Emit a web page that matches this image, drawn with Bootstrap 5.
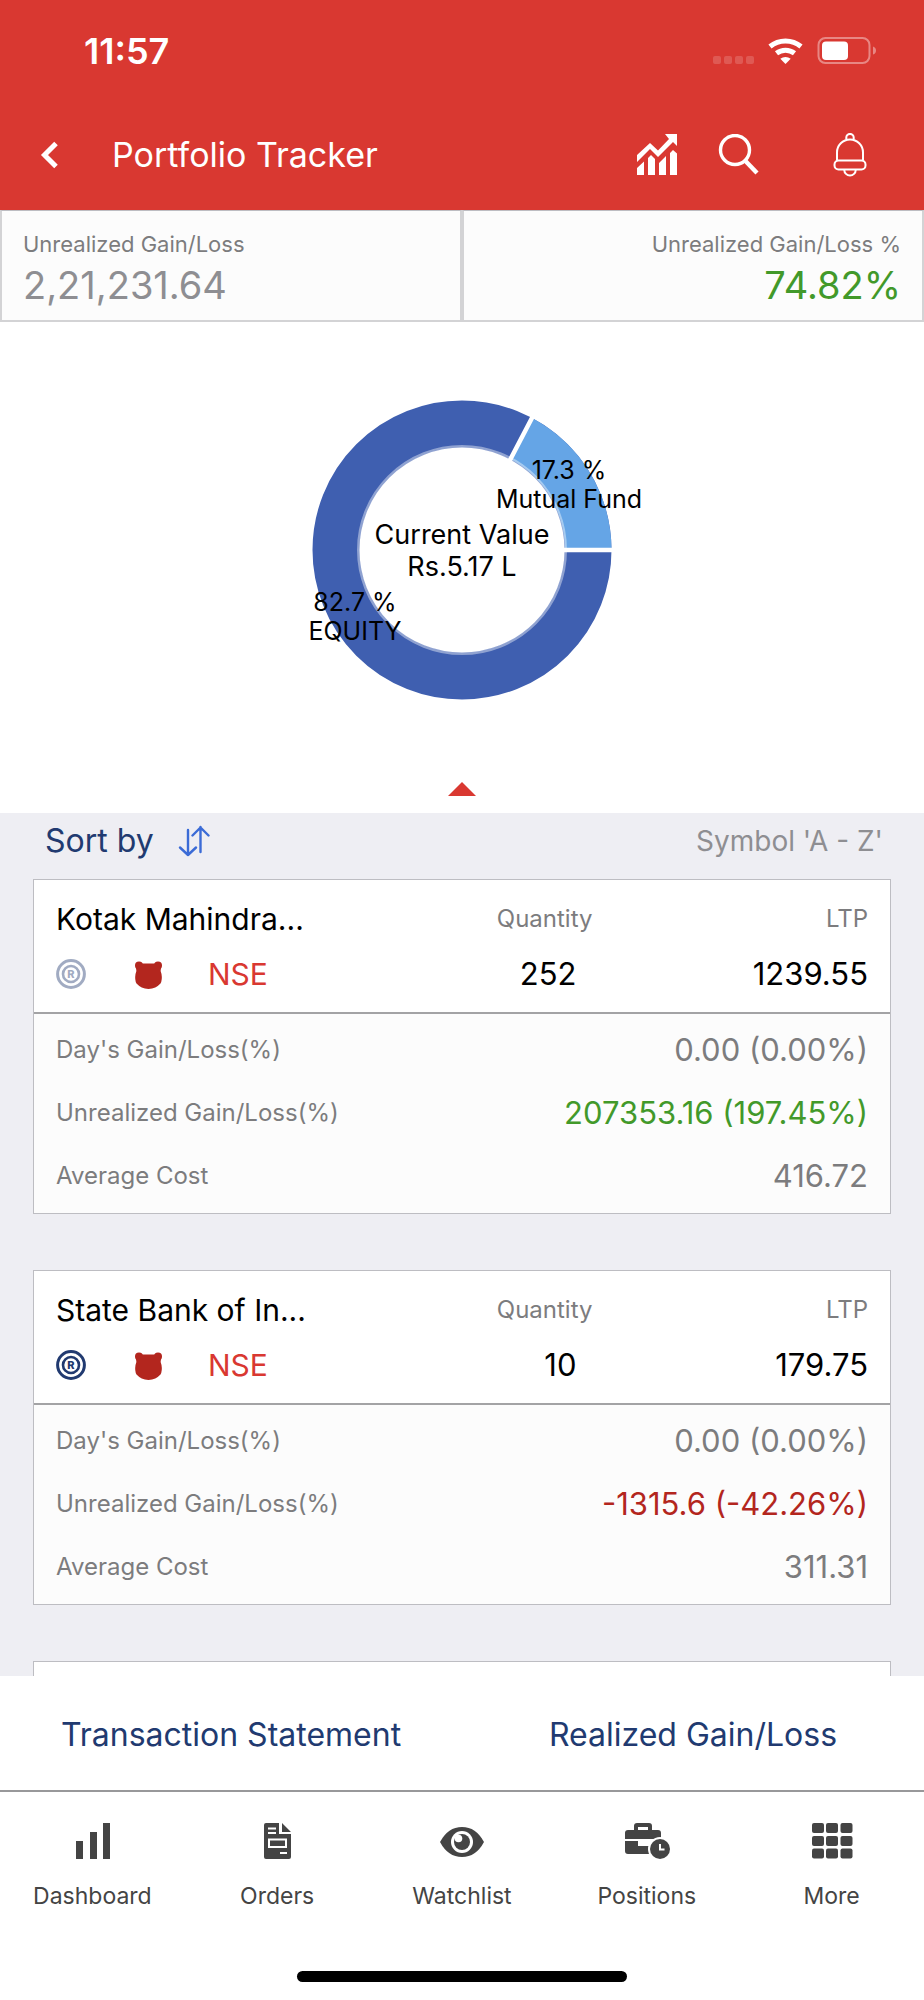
<!DOCTYPE html>
<html lang="en">
<head>
<meta charset="utf-8">
<meta name="viewport" content="width=device-width, initial-scale=1">
<title>Portfolio Tracker</title>
<link href="https://cdn.jsdelivr.net/npm/bootstrap@5.3.0/dist/css/bootstrap.min.css" rel="stylesheet">
<style>
  :root { --brand: #d93831; --navy: #213a70; --muted: #7c7c7e; --gain: #42992a; --loss: #b3261e; --line: #bdbdc2; }
  body { font-family: Inter, "Liberation Sans", sans-serif; background: #fff; color: #000; }
  a { text-decoration: none; color: inherit; }
  svg { display: block; flex: none; }
  .app-top { background: var(--brand); color: #fff; }
  .status-bar { height: 101px; padding: 0 47px 0 84px; }
  .clock { font-size: 36px; font-weight: 600; line-height: 40px; }
  .title-bar { height: 109px; padding: 0 57px 2px 40px; }
  .title-bar h1 { font-size: 34px; font-weight: 400; line-height: 40px; margin: 0 auto 0 54px; }
  .title-bar .search-btn { margin: 0 73px 0 40px; }
  .icon-btn { background: none; border: 0; padding: 0; color: inherit; }
  .stat { background: #fcfcfc; border: 2px solid #d3d3d5; border-top-width: 1px; border-top-color: var(--line); padding: 17px 21px 10px; }
  .label-text { font-size: 22px; line-height: 32px; color: var(--muted); }
  .stat-value { font-size: 38px; line-height: 50px; color: #8e8e92; }
  .chart-area { padding-top: 51px; }
  .chart-area svg { margin: 0 auto; }
  .toggle { margin: 54px auto 16px; }
  .holdings { background: #eeeef3; padding: 0 33px; }
  .sort-row { height: 66px; padding: 0 8px 10px 12px; }
  .link-text { font-size: 32px; line-height: 40px; color: var(--navy); }
  .sort-value { font-size: 28px; line-height: 40px; color: #8e8e92; }
  .holding { border: 1px solid var(--line); background: #fcfcfc; }
  .holding + .holding { margin-top: 56px; }
  .holding-head { display: grid; grid-template-columns: 8fr auto 5fr; row-gap: 15px; padding: 19px 22px 18px 22px; background: #fff; border-bottom: 2px solid #a3a3a5; }
  .holding-body { display: grid; row-gap: 23px; padding: 16px 22px 17px 22px; margin: 0; }
  .cell { line-height: 40px; font-size: 31px; font-weight: 400; margin: 0; }
  .cell.label-text { font-size: 24px; }
  .cell.holding-name { font-size: 30px; }
  .tags { gap: 45px; }
  .gain { color: var(--gain); } .loss { color: var(--loss); } .flat { color: var(--muted); } .exch { color: var(--brand); font-size: 30px; }
  .actions { height: 114px; padding-top: 4px; }
  .tab-bar { border-top: 2px solid #98989a; padding: 30px 0 59px; color: #444; font-size: 23px; line-height: 32px; }
  .tab-bar a { gap: 20px; }
  .home-bar { width: 330px; height: 11px; margin-bottom: 18px; background: #000; }
</style>
</head>
<body>
<div class="d-flex flex-column min-vh-100">
  <header class="app-top">
    <div class="status-bar d-flex align-items-center justify-content-between">
      <span class="clock">11:57</span>
      <svg width="166" height="28" viewBox="0 0 166 28" aria-label="Wi-Fi, battery 50%">
        <g fill="#fff" fill-opacity=".17"><rect x="2" y="19" width="8" height="8" rx="2"/><rect x="13" y="19" width="8" height="8" rx="2"/><rect x="24" y="19" width="8" height="8" rx="2"/><rect x="35" y="19" width="8" height="8" rx="2"/></g>
        <g fill="none" stroke="#fff" stroke-width="5"><path d="M59 9.500A24.500 24.500 0 0 1 90 9.500"/><path d="M65.500 16.300A14.500 14.500 0 0 1 83.500 16.300"/></g>
        <path d="M74.500 27L69.300 21.800A8 8 0 0 1 79.700 21.800Z" fill="#fff"/>
        <rect x="107.500" y="1" width="51" height="25" rx="7" fill="none" stroke="#fff" stroke-opacity=".4" stroke-width="2"/>
        <rect x="111" y="4.500" width="26" height="18.500" rx="4" fill="#fff"/>
        <path d="M162 9.500q3 1 3 4t-3 4Z" fill="#fff" fill-opacity=".4"/>
      </svg>
    </div>
    <div class="title-bar d-flex align-items-center">
      <button class="icon-btn" type="button" aria-label="Back"><svg width="18" height="28" viewBox="0 0 18 28" fill="none" stroke="#fff" stroke-width="5"><path d="M16 2.500 4.500 14 16 25.500"/></svg></button>
      <h1>Portfolio Tracker</h1>
      <button class="icon-btn" type="button" aria-label="Market performance">
        <svg width="42" height="42" viewBox="0 0 42 42" fill="#fff"><path d="M29 0H41V12L37 8 22 23 14 15 1 28V21L14 9 22 16.500 33 5Z"/><path d="M1 34 8 27.500V41H1ZM12 24 15 21 19 25V41H12ZM23 29 30 22V41H23ZM34 19 37 16 41 19.500V41H34Z"/></svg>
      </button>
      <button class="icon-btn search-btn" type="button" aria-label="Search">
        <svg width="42" height="42" viewBox="0 0 42 42" fill="none" stroke="#fff"><circle cx="17" cy="16" r="14.500" stroke-width="3.400"/><path d="M27 26.500 39 39" stroke-width="4.400"/></svg>
      </button>
      <button class="icon-btn" type="button" aria-label="Notifications">
        <svg width="34" height="44" viewBox="0 0 34 44" fill="none" stroke="#fff" stroke-width="2"><path d="M13.300 6.500V4.600a3.700 3.700 0 0 1 7.400 0V6.500M4 27V19.500a13 13 0 0 1 26 0V27"/><rect x="1.500" y="27.500" width="31" height="9" rx="4"/><path d="M11.300 37a5.700 5.500 0 0 0 11.400 0"/></svg>
      </button>
    </div>
  </header>

  <section class="d-flex">
    <div class="stat w-50"><div class="label-text">Unrealized Gain/Loss</div><div class="stat-value">2,21,231.64</div></div>
    <div class="stat w-50 text-end"><div class="label-text">Unrealized Gain/Loss %</div><div class="stat-value gain">74.82%</div></div>
  </section>

  <section class="chart-area">
    <svg width="400" height="354" viewBox="262 373 400 354" role="img" aria-label="Current value by asset class">
      <circle cx="462" cy="550" r="126" fill="none" stroke="#3f5fb0" stroke-width="47"/>
      <path d="M532.500 418.200A149.500 149.500 0 0 1 611.500 550H565A103 103 0 0 0 510.500 459Z" fill="#65a5e6"/>
      <circle cx="462" cy="550" r="103.500" fill="none" stroke="#fff" stroke-opacity=".42" stroke-width="3"/>
      <path d="M563 550H613M509.500 461 533 416" stroke="#fff" stroke-width="4.500"/>
      <g text-anchor="middle" font-size="25">
        <text x="569" y="479">17.3 %</text><text x="569" y="508">Mutual Fund</text>
        <text x="355" y="611">82.7 %</text><text x="355" y="640">EQUITY</text>
      </g>
      <g text-anchor="middle" font-size="27"><text x="462" y="544">Current Value</text><text x="462" y="576">Rs.5.17 L</text></g>
    </svg>
    <button class="icon-btn toggle d-block" type="button" aria-label="Collapse chart"><svg width="28" height="16" viewBox="0 0 28 16"><path d="M0 15 14 1 28 15Z" fill="#d93831"/></svg></button>
  </section>

  <main class="holdings flex-grow-1 d-flex flex-column">
    <div class="sort-row d-flex align-items-center justify-content-between">
      <button class="icon-btn link-text d-flex align-items-center gap-4" type="button">Sort by
        <svg width="32" height="32" viewBox="0 0 32 32" fill="none" stroke="#3b6bd6" stroke-width="2.400" stroke-linecap="round" stroke-linejoin="round"><path d="M10 5V30M2 22.500 10 30 18 22.500M22.500 27V2M14.500 10.500 22.500 2.500 30.500 10.500"/></svg>
      </button>
      <span class="sort-value">Symbol 'A - Z'</span>
    </div>

    <article class="holding">
      <div class="holding-head">
        <h2 class="cell holding-name">Kotak Mahindra...</h2>
        <div class="cell label-text text-center">Quantity</div>
        <div class="cell label-text text-end">LTP</div>
        <div class="cell tags d-flex align-items-center">
          <svg width="30" height="30" viewBox="0 0 30 30" opacity=".42"><g fill="none" stroke="#213a70"><circle cx="15" cy="15" r="13.400" stroke-width="3"/><circle cx="15" cy="15" r="8" stroke-width="2.600"/></g><text x="15" y="19" text-anchor="middle" font-size="11" font-weight="800" fill="#213a70">R</text></svg>
          <svg width="32" height="30" viewBox="0 0 32 30" fill="#b3261e"><circle cx="8" cy="6.500" r="4"/><circle cx="27" cy="6.500" r="4"/><path d="M8 4.500H27L30 9Q29 12 30.500 15Q31.500 21 29.500 24.500Q25 29.500 17.500 30Q10 29.500 5.500 24.500Q3.500 21 4.500 15Q6 12 5 9Z"/></svg>
          <span class="exch">NSE</span>
        </div>
        <div class="cell text-end pe-3">252</div>
        <div class="cell text-end">1239.55</div>
      </div>
      <dl class="holding-body">
        <div class="d-flex justify-content-between"><dt class="cell label-text">Day's Gain/Loss(%)</dt><dd class="cell flat">0.00 (0.00%)</dd></div>
        <div class="d-flex justify-content-between"><dt class="cell label-text">Unrealized Gain/Loss(%)</dt><dd class="cell gain">207353.16 (197.45%)</dd></div>
        <div class="d-flex justify-content-between"><dt class="cell label-text">Average Cost</dt><dd class="cell flat">416.72</dd></div>
      </dl>
    </article>

    <article class="holding">
      <div class="holding-head">
        <h2 class="cell holding-name">State Bank of In...</h2>
        <div class="cell label-text text-center">Quantity</div>
        <div class="cell label-text text-end">LTP</div>
        <div class="cell tags d-flex align-items-center">
          <svg width="30" height="30" viewBox="0 0 30 30"><g fill="none" stroke="#213a70"><circle cx="15" cy="15" r="13.400" stroke-width="3"/><circle cx="15" cy="15" r="8" stroke-width="2.600"/></g><text x="15" y="19" text-anchor="middle" font-size="11" font-weight="800" fill="#213a70">R</text></svg>
          <svg width="32" height="30" viewBox="0 0 32 30" fill="#b3261e"><circle cx="8" cy="6.500" r="4"/><circle cx="27" cy="6.500" r="4"/><path d="M8 4.500H27L30 9Q29 12 30.500 15Q31.500 21 29.500 24.500Q25 29.500 17.500 30Q10 29.500 5.500 24.500Q3.500 21 4.500 15Q6 12 5 9Z"/></svg>
          <span class="exch">NSE</span>
        </div>
        <div class="cell text-end pe-3">10</div>
        <div class="cell text-end">179.75</div>
      </div>
      <dl class="holding-body">
        <div class="d-flex justify-content-between"><dt class="cell label-text">Day's Gain/Loss(%)</dt><dd class="cell flat">0.00 (0.00%)</dd></div>
        <div class="d-flex justify-content-between"><dt class="cell label-text">Unrealized Gain/Loss(%)</dt><dd class="cell loss">-1315.6 (-42.26%)</dd></div>
        <div class="d-flex justify-content-between"><dt class="cell label-text">Average Cost</dt><dd class="cell flat">311.31</dd></div>
      </dl>
    </article>

    <div class="holding bg-white border-bottom-0 flex-grow-1"></div>
  </main>

  <footer class="bg-white">
    <div class="actions d-flex align-items-center text-center">
      <a class="link-text w-50" href="#statement">Transaction Statement</a>
      <a class="link-text w-50" href="#realized">Realized Gain/Loss</a>
    </div>
    <nav class="tab-bar row row-cols-5 g-0" aria-label="Main">
      <a class="col d-flex flex-column align-items-center" href="#dashboard"><svg width="38" height="38" viewBox="0 0 38 38" fill="#444"><path d="M3 19H10V37H3ZM17 10H24V37H17ZM30 1H37V37H30Z"/></svg>Dashboard</a>
      <a class="col d-flex flex-column align-items-center" href="#orders"><svg width="28" height="38" viewBox="0 0 28 38"><path d="M3 1H16V12H28V35Q28 37 26 37H3Q1 37 1 35V3Q1 1 3 1ZM19 1 28 10H19Z" fill="#444"/><g fill="none" stroke="#fff" stroke-width="2"><path d="M5 6.500H13M5 11H13M17 31H24"/><rect x="6" y="17.500" width="17" height="7.500"/></g></svg>Orders</a>
      <a class="col d-flex flex-column align-items-center" href="#watchlist"><svg width="46" height="38" viewBox="0 0 46 38"><path d="M1 20Q9 5 23 5T45 20Q37 35 23 35T1 20Z" fill="#444"/><circle cx="23" cy="20" r="11" fill="#fff"/><circle cx="23" cy="20" r="8" fill="#444"/><circle cx="19.500" cy="16.500" r="3.800" fill="#fff"/></svg>Watchlist</a>
      <a class="col d-flex flex-column align-items-center" href="#positions"><svg width="46" height="38" viewBox="0 0 46 38"><path d="M10 8V4Q10 1 13 1H25Q28 1 28 4V8H34Q37 8 37 11V17H1V11Q1 8 4 8ZM14 8H24V5H14ZM1 19H14V24H27V32H4Q1 32 1 29Z" fill="#444" fill-rule="evenodd"/><circle cx="36" cy="27" r="12" fill="#fff"/><circle cx="36" cy="27" r="10" fill="#444"/><path d="M36 22V27.500H40.500" fill="none" stroke="#fff" stroke-width="2"/></svg>Positions</a>
      <a class="col d-flex flex-column align-items-center" href="#more"><svg width="42" height="38" viewBox="0 0 42 38" fill="#444"><rect x="1" y="1" width="12" height="10" rx="2"/><rect x="15" y="1" width="12" height="10" rx="2"/><rect x="29.500" y="1" width="12" height="10" rx="2"/><rect x="1" y="14" width="12" height="10" rx="2"/><rect x="15" y="14" width="12" height="10" rx="2"/><rect x="29.500" y="14" width="12" height="10" rx="2"/><rect x="1" y="26.500" width="12" height="10" rx="2"/><rect x="15" y="26.500" width="12" height="10" rx="2"/><rect x="29.500" y="26.500" width="12" height="10" rx="2"/></svg>More</a>
    </nav>
    <div class="home-bar rounded-pill mx-auto"></div>
  </footer>
</div>
<script src="https://cdn.jsdelivr.net/npm/bootstrap@5.3.0/dist/js/bootstrap.bundle.min.js"></script>
</body>
</html>
